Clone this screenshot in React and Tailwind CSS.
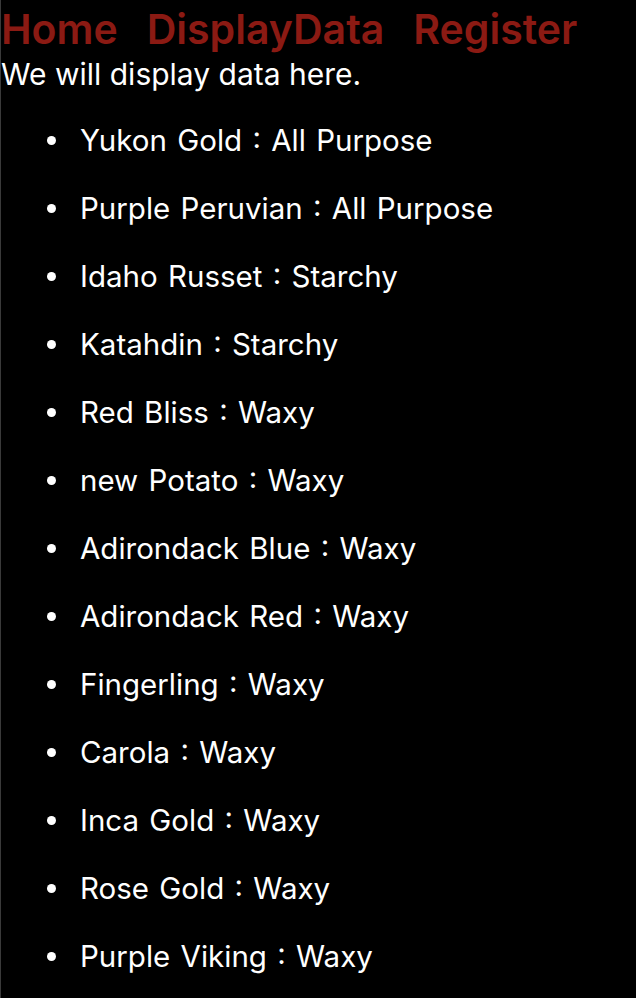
const potatoes = [
  ["Yukon Gold", "All Purpose"],
  ["Purple Peruvian", "All Purpose"],
  ["Idaho Russet", "Starchy"],
  ["Katahdin", "Starchy"],
  ["Red Bliss", "Waxy"],
  ["new Potato", "Waxy"],
  ["Adirondack Blue", "Waxy"],
  ["Adirondack Red", "Waxy"],
  ["Fingerling", "Waxy"],
  ["Carola", "Waxy"],
  ["Inca Gold", "Waxy"],
  ["Rose Gold", "Waxy"],
  ["Purple Viking", "Waxy"],
]

export default function App() {
  return (
    <div className="min-h-screen bg-black text-white border-l border-[#3a3a3a] font-['Inter',sans-serif] overflow-hidden">
      {/* Nav */}
      <nav className="flex gap-[29px] text-[41px] leading-[58px] font-semibold text-[#8b1a13]">
        <a href="#">Home</a>
        <a href="#">DisplayData</a>
        <a href="#">Register</a>
      </nav>
      <p className="text-[30px] leading-[32px]">We will display data here.</p>

      <ul className="mt-[16px] text-[29.5px] [word-spacing:2px]">
        {potatoes.map(([name, type]) => (
          <li key={name} className="flex items-center leading-[36px] py-[16px]">
            <span className="ml-[46px] mr-[24px] w-[9px] h-[9px] rounded-full bg-white shrink-0" />
            <span>
              {name} : {type}
            </span>
          </li>
        ))}
      </ul>
    </div>
  )
}
